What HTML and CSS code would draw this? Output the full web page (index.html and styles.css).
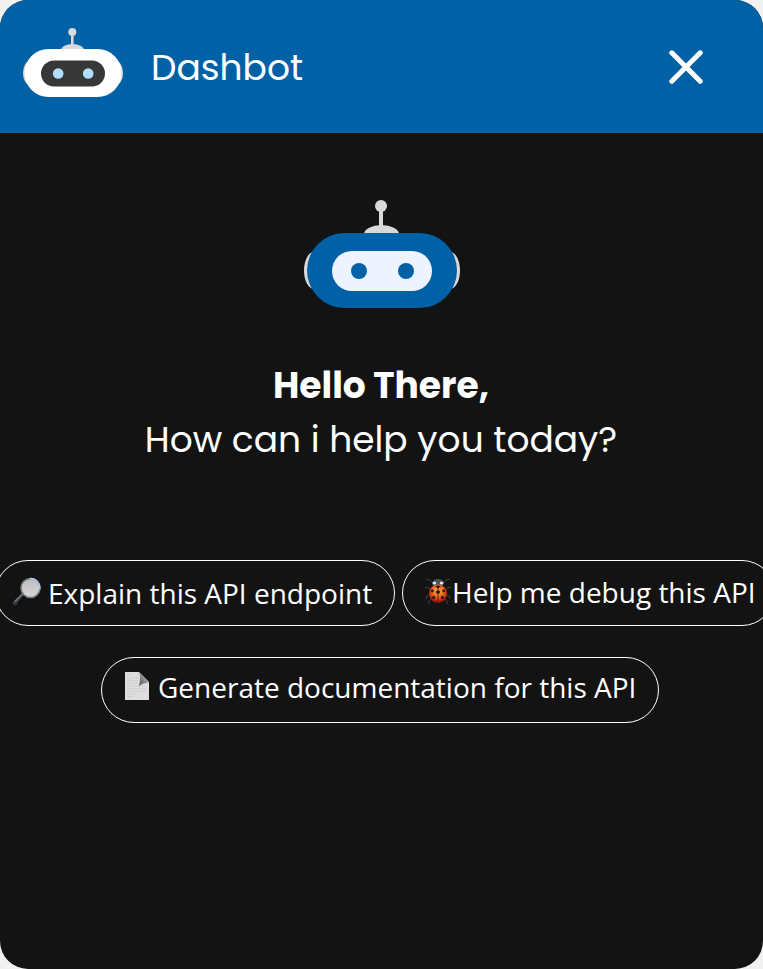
FILE: index.html
```html
<!DOCTYPE html>
<html lang="en">
<head>
<meta charset="utf-8">
<title>Dashbot</title>
<link rel="stylesheet" href="styles.css">
</head>
<body>
<div class="panel">
  <header class="header">
    <svg class="logo" viewBox="0 0 100 70" aria-hidden="true">
      <ellipse cx="7" cy="45" rx="7" ry="12" fill="#d9d9d9"/>
      <ellipse cx="93" cy="45" rx="7" ry="12" fill="#d9d9d9"/>
      <path d="M48 5h2.6v15H48z" fill="#d9d9d9"/>
      <circle cx="49.3" cy="4" r="4" fill="#d9d9d9"/>
      <ellipse cx="49.5" cy="22" rx="11.5" ry="6" fill="#d9d9d9"/>
      <rect x="1.5" y="21" width="97" height="48" rx="24" fill="#fff"/>
      <rect x="18" y="32.5" width="64" height="26" rx="13" fill="#373737"/>
      <circle cx="35.2" cy="45.5" r="5.3" fill="#b0deff"/>
      <circle cx="65.2" cy="45.5" r="5.3" fill="#b0deff"/>
    </svg>
    <h1 class="title">Dashbot</h1>
    <button class="close" aria-label="Close">
      <svg viewBox="0 0 34 34"><path d="M2.8 2.8 31.2 31.2M31.2 2.8 2.8 31.2" fill="none" stroke="#fff" stroke-width="5" stroke-linecap="round"/></svg>
    </button>
  </header>
  <main class="main">
    <svg class="robot" viewBox="0 0 156 108" aria-hidden="true">
      <ellipse cx="10" cy="70.5" rx="10" ry="18.5" fill="#d9d9d9"/>
      <ellipse cx="146" cy="70.5" rx="10" ry="18.5" fill="#d9d9d9"/>
      <path d="M75 6h4v24h-4z" fill="#d9d9d9"/>
      <circle cx="77" cy="6" r="6" fill="#d9d9d9"/>
      <ellipse cx="77.5" cy="34" rx="17.5" ry="9" fill="#d9d9d9"/>
      <rect x="3" y="33" width="150" height="75" rx="37.5" fill="#0061a6"/>
      <rect x="28" y="51" width="100" height="40" rx="20" fill="#edf4ff"/>
      <circle cx="55" cy="71" r="8" fill="#0061a6"/>
      <circle cx="102" cy="71" r="8" fill="#0061a6"/>
    </svg>
    <p class="greeting"><strong class="hello">Hello There,</strong><span>How can i help you today?</span></p>
    <div class="chips">
      <button class="chip explain">
        <svg class="glass" viewBox="0 0 30 30" aria-hidden="true">
          <defs><linearGradient id="lens" x2="0" y2="1"><stop stop-color="#bebcbc"/><stop offset="1" stop-color="#d8d6d6"/></linearGradient></defs>
          <path d="M12 17 3 26" stroke="#343b42" stroke-width="4.5" stroke-linecap="round"/>
          <path d="M11 16.5 3 24.5" stroke="#77818a" stroke-width="1.2"/>
          <path d="m12.5 19-7 8" stroke="#090b0d" stroke-width="1.5"/>
          <circle cx="18.5" cy="11" r="9.5" fill="url(#lens)" stroke="#777e84" stroke-width="1.5"/>
          <path d="M18 1.5a9.5 9.5 0 0 1 9.8 11" fill="none" stroke="#a8cff0" stroke-width="1.4"/>
        </svg>
        <span>Explain this API endpoint</span>
      </button>
      <button class="chip debug">
        <svg class="bug" viewBox="0 0 26 27" aria-hidden="true">
          <defs><radialGradient id="shell" cy=".35" r=".6"><stop stop-color="#ffb052"/><stop offset=".55" stop-color="#f0641d"/><stop offset="1" stop-color="#9e1608"/></radialGradient></defs>
          <path d="M8 5 5 2 1 1m17 4 3-3 4-1M5 11 2 9 0 10m21 1 3-2 2 1M5 17l-3 1-1 3m20-4 3 1 1 3M6 21l-2 2v3m16-5 2 2v3" fill="none" stroke="#464342" stroke-width="1"/>
          <ellipse cx="13" cy="5.5" rx="5.5" ry="4.5" fill="#46515a"/>
          <ellipse cx="9.4" cy="5" rx="1.9" ry="1.6" fill="#dbe5ea"/><ellipse cx="16.6" cy="5" rx="1.9" ry="1.6" fill="#dbe5ea"/>
          <ellipse cx="13" cy="15.7" rx="9" ry="9.2" fill="url(#shell)"/>
          <path d="M13 7v18" stroke="#531006" stroke-width=".8"/>
          <g fill="#25120c"><path d="m10 8 3 2.500 3-2.500z"/><ellipse cx="13" cy="14" rx="2" ry="1.800"/><circle cx="7.3" cy="13" r="1.4"/><circle cx="18.700" cy="13" r="1.4"/><circle cx="8.600" cy="19.5" r="1.6"/><circle cx="17.400" cy="19.5" r="1.6"/></g>
        </svg>
        <span>Help me debug this API</span>
      </button>
      <button class="chip docs">
        <svg class="page" viewBox="0 0 24 28" aria-hidden="true">
          <defs><linearGradient id="fold" y1="1" x2="1" y2="0"><stop stop-color="#555"/><stop offset="1" stop-color="#ccc"/></linearGradient></defs>
          <path d="M0 0h14l10 10v18H0z" fill="#dedede"/>
          <path d="M2 2.5h5M2 6h11M2 8.5h11M2 11h11M2 14h19M2 16.5h19M2 19h19M2 22h8M2 24.5h6" stroke="#cbcbcb" stroke-width=".8"/>
          <path d="M14 0q2 5 0 14 3-3 10-3.500z" fill="url(#fold)"/>
        </svg>
        <span>Generate documentation for this API</span>
      </button>
    </div>
  </main>
</div>
</body>
</html>
```
FILE: styles.css
```css
* { box-sizing: border-box; }
body { margin: 0; background: #f1f1f1; color: #fff; }
svg { display: block; flex: none; }
button { border: 0; padding: 0; background: none; color: inherit; }
.panel { height: 969px; overflow: hidden; border-radius: 28px; background: #131313; }
.header { display: flex; align-items: center; height: 133px; padding: 0 60px 0 23px; background: #0061a6; }
.logo { width: 100px; height: 70px; margin-top: -8px; }
.title {
  margin: 2px auto 0 28px;
  font: 400 36px/54px Poppins, Inter, sans-serif;
}
.close svg { width: 34px; height: 34px; }
.main { display: flex; flex-direction: column; align-items: center; padding-top: 67px; }
.robot { width: 156px; height: 108px; }
.greeting {
  display: flex; flex-direction: column; align-items: center;
  margin: 51px 1px 0 0;
  font: 400 36px/54px Poppins, Inter, sans-serif;
  white-space: nowrap;
}
.hello { font-weight: 700; }
.chips { display: grid; grid-template-columns: 400px 373px; gap: 31px 7px; width: 780px; margin-top: 93px; margin-left: 7px; }
.chip {
  display: flex; align-items: center; height: 66px;
  border: 1.3px solid #fff; border-radius: 33px;
  font: 400 28px/38px "Open Sans", sans-serif;
  white-space: nowrap;
}
.explain { padding-left: 16px; }
.debug { padding-left: 22px; }
.debug span { margin-top: -2px; }
.docs { grid-column: 1 / -1; width: 558px; margin-left: 106px; padding-left: 23px; }
.docs span { margin-top: -6px; }
.glass { width: 30px; height: 30px; margin: -2px 6px 0 0; }
.bug { width: 26px; height: 27px; margin: -4px 1px 0 0; }
.page { width: 24px; height: 28px; margin: -8px 9px 0 0; }
```
